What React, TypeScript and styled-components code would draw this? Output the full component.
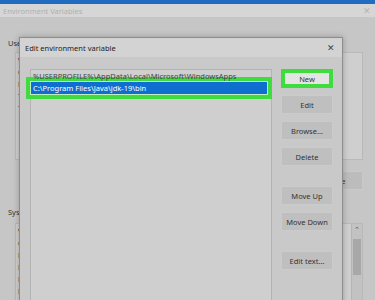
import React from 'react';
import styled, { createGlobalStyle } from 'styled-components';

const GlobalStyle = createGlobalStyle`
  html, body {
    margin: 0;
    padding: 0;
    background: #c6c6c6;
    font-family: 'Noto Sans', 'Liberation Sans', sans-serif;
  }
`;

const Screen = styled.div`
  position: relative;
  width: 375px;
  height: 300px;
  overflow: hidden;
  background: #c6c6c6;
  display: flex;
  flex-direction: column;
`;

const TopBar = styled.div`
  height: 4px;
  background: #1f6cc0;
  flex-shrink: 0;
`;

const BgTitleBar = styled.div`
  height: 20px;
  display: flex;
  align-items: center;
  justify-content: space-between;
  padding: 0 4px 0 3px;
  background: #d6d6d6;
  color: #b0b0b0;
  font-size: 7.5px;
`;

const BgBody = styled.div`
  flex: 1;
  display: flex;
  flex-direction: column;
  padding: 0 12px 0 8px;
`;

const SectionLabel = styled.div<{ $top: number }>`
  margin-top: ${(p) => p.$top}px;
  font-size: 7.5px;
  color: #333;
  line-height: 12px;
`;

const BgList = styled.div<{ $height: number; $top: number }>`
  position: relative;
  margin: ${(p) => p.$top}px 0 0 7px;
  height: ${(p) => p.$height}px;
  background: #cfcfcf;
  border: 1px solid #b9b9b9;
  padding: 1px 0 0 2px;
  font-size: 7.5px;
  line-height: 12px;
  color: #333;
  overflow: hidden;
`;

const BgButtonRow = styled.div`
  display: flex;
  justify-content: flex-end;
  margin-top: 11px;
`;

const BgButton = styled.div`
  width: 56px;
  height: 17px;
  background: #bcbcbc;
  border: 1px solid #c9c9c9;
  font-size: 7.5px;
  color: #333;
  display: flex;
  align-items: center;
  justify-content: center;
`;

const ScrollTrack = styled.div`
  position: absolute;
  right: 0;
  top: 0;
  bottom: 0;
  width: 10px;
  background: #c2c2c2;
  border-left: 1px solid #b4b4b4;
  display: flex;
  flex-direction: column;
  align-items: center;
  font-size: 7px;
  color: #555;
`;

const ScrollThumb = styled.div`
  margin-top: 3px;
  width: 8px;
  height: 36px;
  background: #a8a8a8;
`;

const Dialog = styled.div`
  position: absolute;
  left: 19px;
  top: 37px;
  width: 322px;
  height: 280px;
  background: #c9c9c9;
  border: 1px solid #8d8d8d;
  box-shadow: 0 0 6px rgba(0, 0, 0, 0.25);
  display: flex;
  flex-direction: column;
`;

const DialogTitleBar = styled.div`
  height: 19px;
  display: flex;
  align-items: center;
  justify-content: space-between;
  padding: 0 7px 0 5px;
  background: #d3d3d3;
  font-size: 7.5px;
  color: #222;
`;

const CloseGlyph = styled.span<{ $faded?: boolean }>`
  font-size: 9px;
  color: ${(p) => (p.$faded ? '#b5b5b5' : '#444')};
`;

const DialogBody = styled.div`
  flex: 1;
  display: flex;
  padding: 12px 0 0 10px;
`;

const ValueList = styled.div`
  width: 240px;
  background: #cfcfcf;
  border: 1px solid #b3b3b3;
  font-size: 7.5px;
  color: #333;
`;

const ValueRow = styled.div<{ $selected?: boolean }>`
  height: 12px;
  line-height: 12px;
  margin-right: 4px;
  padding-left: 2px;
  white-space: nowrap;
  overflow: hidden;
  background: ${(p) => (p.$selected ? '#0f6fd0' : 'transparent')};
  color: ${(p) => (p.$selected ? '#fff' : '#444')};
  box-shadow: ${(p) =>
    p.$selected ? '0 0 0 1px #bfeebf, 0 0 0 5px #3fdc3f' : 'none'};
`;

const ButtonColumn = styled.div`
  display: flex;
  flex-direction: column;
  margin-left: 9px;
  gap: 7px;
`;

const DialogButton = styled.div<{ $highlight?: boolean; $gapBefore?: boolean }>`
  box-sizing: border-box;
  width: 52px;
  height: 19px;
  margin-top: ${(p) => (p.$gapBefore ? '13px' : '0')};
  background: ${(p) => (p.$highlight ? '#e4e4e4' : '#bfbfbf')};
  border: ${(p) => (p.$highlight ? '4px solid #3fdc3f' : '1px solid #cbcbcb')};
  font-size: 7.5px;
  color: #333;
  display: flex;
  align-items: center;
  justify-content: center;
`;

const userVars = ['Variable', 'ChocolateyLastPathUpdate', 'Path', 'TEMP', 'TMP'];
const systemVars = ['Variable', 'ComSpec', 'DriverData', 'NUMBER_OF_PROCESSORS', 'NVM_HOME', 'NVM_SYMLINK'];

const buttons: { label: string; highlight?: boolean; gapBefore?: boolean }[] = [
  { label: 'New', highlight: true },
  { label: 'Edit' },
  { label: 'Browse...' },
  { label: 'Delete' },
  { label: 'Move Up', gapBefore: true },
  { label: 'Move Down' },
  { label: 'Edit text...', gapBefore: true },
];

const App: React.FC = () => {
  return (
    <Screen>
      <GlobalStyle />
      <TopBar />
      <BgTitleBar>
        <span>Environment Variables</span>
        <CloseGlyph $faded>✕</CloseGlyph>
      </BgTitleBar>
      <BgBody>
        <SectionLabel $top={20}>User variables for user</SectionLabel>
        <BgList $top={3} $height={105}>
          {userVars.map((v) => (
            <div key={v}>{v}</div>
          ))}
        </BgList>
        <BgButtonRow>
          <BgButton>Delete</BgButton>
        </BgButtonRow>
        <SectionLabel $top={16}>System variables</SectionLabel>
        <BgList $top={5} $height={100}>
          {systemVars.map((v) => (
            <div key={v}>{v}</div>
          ))}
          <ScrollTrack>
            <span>⌃</span>
            <ScrollThumb />
          </ScrollTrack>
        </BgList>
      </BgBody>

      <Dialog>
        <DialogTitleBar>
          <span>Edit environment variable</span>
          <CloseGlyph>✕</CloseGlyph>
        </DialogTitleBar>
        <DialogBody>
          <ValueList>
            <ValueRow>%USERPROFILE%\AppData\Local\Microsoft\WindowsApps</ValueRow>
            <ValueRow $selected>C:\Program Files\Java\jdk-19\bin</ValueRow>
          </ValueList>
          <ButtonColumn>
            {buttons.map((b) => (
              <DialogButton key={b.label} $highlight={b.highlight} $gapBefore={b.gapBefore}>
                {b.label}
              </DialogButton>
            ))}
          </ButtonColumn>
        </DialogBody>
      </Dialog>
    </Screen>
  );
};

export default App;
